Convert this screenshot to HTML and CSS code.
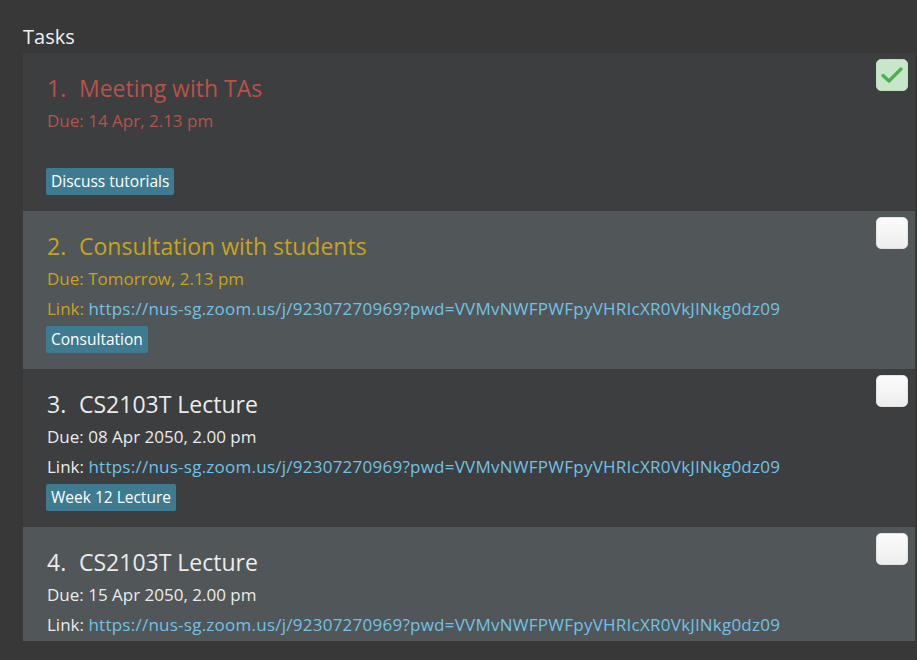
FILE: index.html
```html
<!DOCTYPE html>
<html>
<head>
<meta charset="utf-8">
<link rel="stylesheet" href="styles.css">
</head>
<body>
<div class="panel">
  <div class="heading">Tasks</div>
  <div class="list">
    <div class="card dark done">
      <div class="content">
        <div class="title"><span class="num">1.</span><span>Meeting with TAs</span></div>
        <div class="line">Due: 14 Apr, 2.13 pm</div>
        <div class="line"></div>
        <div class="tags"><span class="tag">Discuss tutorials</span></div>
      </div>
      <div class="check checked">
        <svg width="22" height="18" viewBox="0 0 22 18"><path d="M2 9.5 L8 15 L20 3" fill="none" stroke="#4caf50" stroke-width="3.2" stroke-linecap="round" stroke-linejoin="round"/></svg>
      </div>
    </div>
    <div class="card light soon">
      <div class="content">
        <div class="title"><span class="num">2.</span><span>Consultation with students</span></div>
        <div class="line">Due: Tomorrow, 2.13 pm</div>
        <div class="line">Link: <span class="url">https://nus-sg.zoom.us/j/92307270969?pwd=VVMvNWFPWFpyVHRIcXR0VkJlNkg0dz09</span></div>
        <div class="tags"><span class="tag">Consultation</span></div>
      </div>
      <div class="check"></div>
    </div>
    <div class="card dark">
      <div class="content">
        <div class="title"><span class="num">3.</span><span>CS2103T Lecture</span></div>
        <div class="line">Due: 08 Apr 2050, 2.00 pm</div>
        <div class="line">Link: <span class="url">https://nus-sg.zoom.us/j/92307270969?pwd=VVMvNWFPWFpyVHRIcXR0VkJlNkg0dz09</span></div>
        <div class="tags"><span class="tag">Week 12 Lecture</span></div>
      </div>
      <div class="check"></div>
    </div>
    <div class="card light">
      <div class="content">
        <div class="title"><span class="num">4.</span><span>CS2103T Lecture</span></div>
        <div class="line">Due: 15 Apr 2050, 2.00 pm</div>
        <div class="line">Link: <span class="url">https://nus-sg.zoom.us/j/92307270969?pwd=VVMvNWFPWFpyVHRIcXR0VkJlNkg0dz09</span></div>
      </div>
      <div class="check"></div>
    </div>
  </div>
</div>
</body>
</html>
```
FILE: styles.css
```css
html, body {
  margin: 0;
  padding: 0;
  background: #383838;
  width: 917px;
  height: 660px;
  overflow: hidden;
}
body {
  font-family: "Open Sans", "Noto Sans", sans-serif;
  color: #ffffff;
}
.panel {
  padding: 23px 2px 0 23px;
}
.heading {
  font-size: 20px;
  line-height: 30px;
  height: 30px;
  color: #f0f0f0;
  margin-top: -1px;
  margin-bottom: 1px;
}
.list {
  height: 588px;
  overflow: hidden;
  display: flex;
  flex-direction: column;
}
.card {
  flex: 0 0 158px;
  height: 158px;
  box-sizing: border-box;
  display: flex;
  padding: 0 7px 0 24px;
}
.card.dark { background: #3c3e3f; }
.card.light { background: #515658; }
.content {
  flex: 1;
  padding-top: 20px;
  color: #ebebeb;
}
.title {
  font-size: 23px;
  line-height: 30px;
  height: 30px;
  margin-bottom: 3px;
  display: flex;
  gap: 14px;
  white-space: nowrap;
}
.title .num {
  width: 18px;
}
.line {
  font-size: 17px;
  line-height: 30px;
  height: 30px;
  white-space: nowrap;
}
.url {
  color: #72c2e6;
  letter-spacing: 0.25px;
}
.done .content { color: #b8524a; }
.soon .content { color: #c6a41e; }
.tags {
  margin-top: 2px;
  height: 27px;
  display: flex;
}
.tag {
  background: #3e7b91;
  color: #ffffff;
  font-size: 15.5px;
  line-height: 27px;
  padding: 0 5px;
  border-radius: 2px;
  margin-left: -1px;
}
.check {
  margin-top: 6px;
  width: 32px;
  height: 32px;
  box-sizing: border-box;
  border-radius: 5px;
  background: linear-gradient(#fbfbfb, #ededed);
  border: 1px solid #e2e2e2;
  display: flex;
  align-items: center;
  justify-content: center;
}
.check.checked {
  background: #c8e6c9;
  border-color: #bfe0c0;
}
```
